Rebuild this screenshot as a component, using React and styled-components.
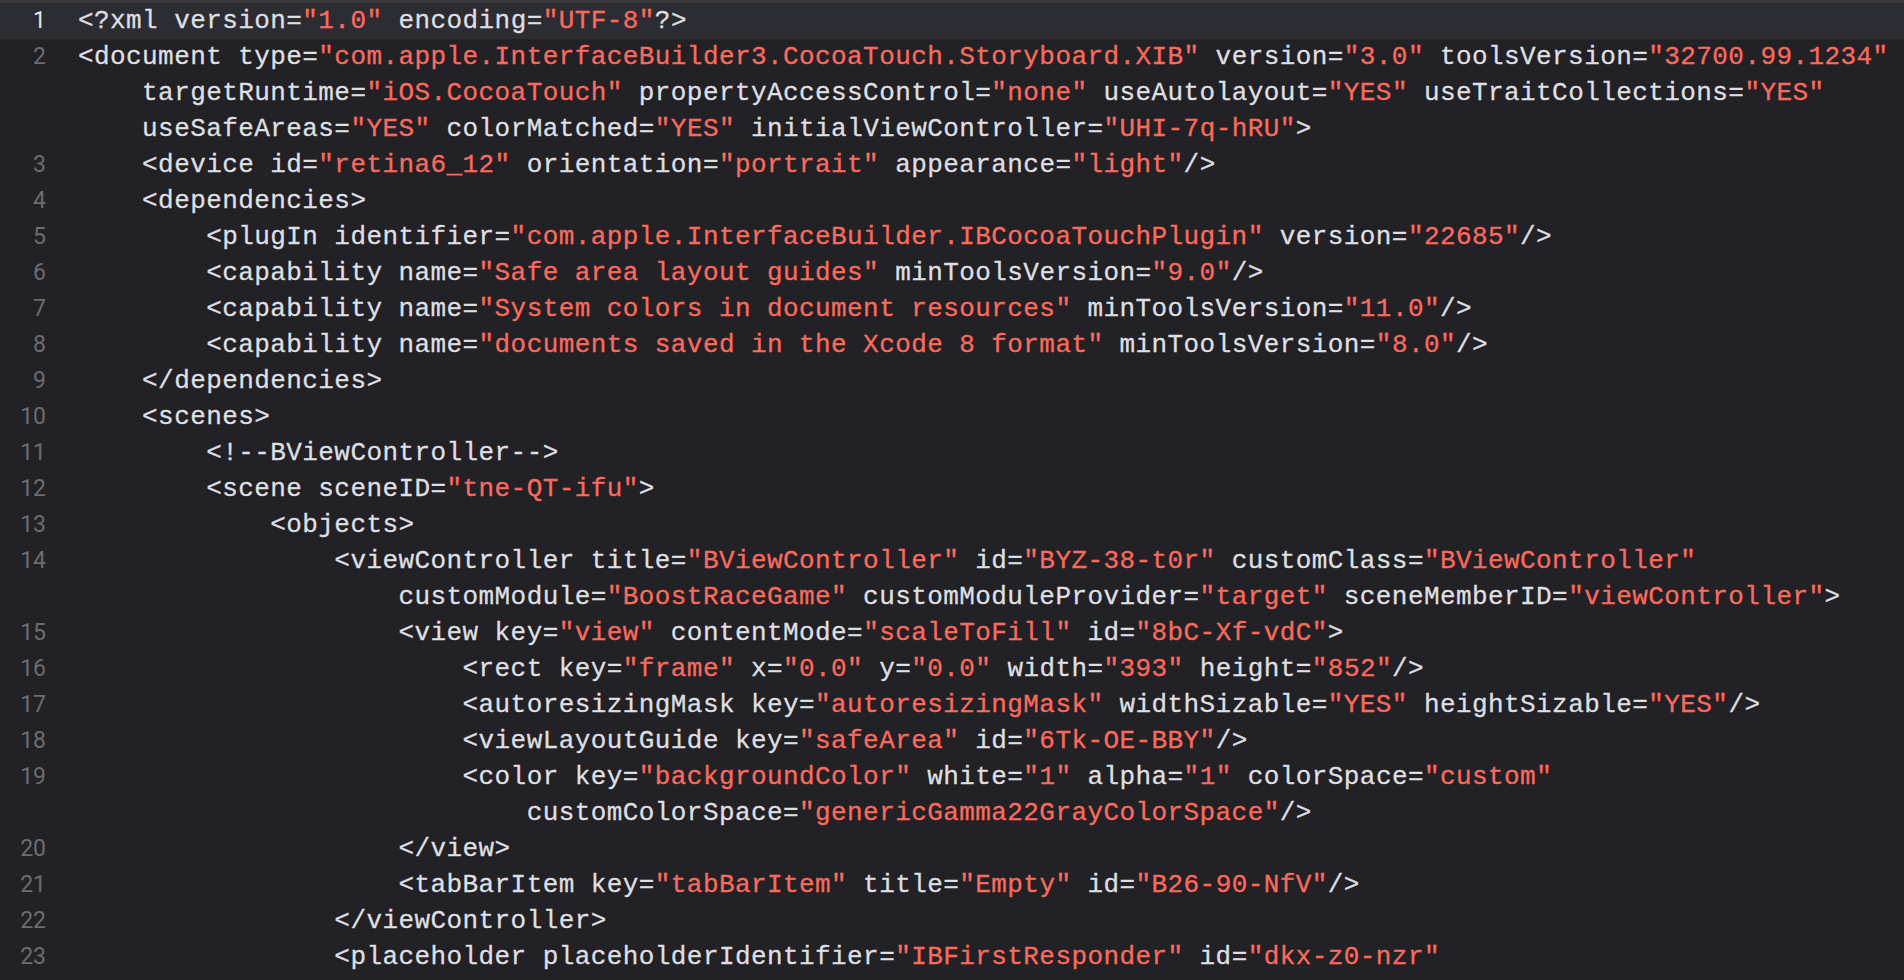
import React from "react";
import styled, { createGlobalStyle } from "styled-components";

const GlobalStyle = createGlobalStyle`
  html, body {
    margin: 0;
    padding: 0;
    background: #212126;
    overflow: hidden;
  }
`;

const lines = [
  [`<?xml version="1.0" encoding="UTF-8"?>`],
  [
    `<document type="com.apple.InterfaceBuilder3.CocoaTouch.Storyboard.XIB" version="3.0" toolsVersion="32700.99.1234"`,
    `    targetRuntime="iOS.CocoaTouch" propertyAccessControl="none" useAutolayout="YES" useTraitCollections="YES"`,
    `    useSafeAreas="YES" colorMatched="YES" initialViewController="UHI-7q-hRU">`,
  ],
  [`    <device id="retina6_12" orientation="portrait" appearance="light"/>`],
  [`    <dependencies>`],
  [`        <plugIn identifier="com.apple.InterfaceBuilder.IBCocoaTouchPlugin" version="22685"/>`],
  [`        <capability name="Safe area layout guides" minToolsVersion="9.0"/>`],
  [`        <capability name="System colors in document resources" minToolsVersion="11.0"/>`],
  [`        <capability name="documents saved in the Xcode 8 format" minToolsVersion="8.0"/>`],
  [`    </dependencies>`],
  [`    <scenes>`],
  [`        <!--BViewController-->`],
  [`        <scene sceneID="tne-QT-ifu">`],
  [`            <objects>`],
  [
    `                <viewController title="BViewController" id="BYZ-38-t0r" customClass="BViewController"`,
    `                    customModule="BoostRaceGame" customModuleProvider="target" sceneMemberID="viewController">`,
  ],
  [`                    <view key="view" contentMode="scaleToFill" id="8bC-Xf-vdC">`],
  [`                        <rect key="frame" x="0.0" y="0.0" width="393" height="852"/>`],
  [`                        <autoresizingMask key="autoresizingMask" widthSizable="YES" heightSizable="YES"/>`],
  [`                        <viewLayoutGuide key="safeArea" id="6Tk-OE-BBY"/>`],
  [
    `                        <color key="backgroundColor" white="1" alpha="1" colorSpace="custom"`,
    `                            customColorSpace="genericGamma22GrayColorSpace"/>`,
  ],
  [`                    </view>`],
  [`                    <tabBarItem key="tabBarItem" title="Empty" id="B26-90-NfV"/>`],
  [`                </viewController>`],
  [
    `                <placeholder placeholderIdentifier="IBFirstResponder" id="dkx-z0-nzr"`,
    `                    sceneMemberID="firstResponder"/>`,
  ],
];

const CURRENT = 0;

export default function App() {
  return (
    <>
      <GlobalStyle />
      <Editor>
        {lines.map((rows, i) => (
          <Line key={i} $current={i === CURRENT}>
            <Num $current={i === CURRENT}>{i + 1}</Num>
            <Code>
              {rows.map((row, j) => (
                <Row key={j}>
                  {row.split(/("[^"]*")/).map((part, k) =>
                    part.startsWith('"') ? (
                      <Str key={k}>{part}</Str>
                    ) : (
                      <React.Fragment key={k}>{part}</React.Fragment>
                    )
                  )}
                </Row>
              ))}
            </Code>
          </Line>
        ))}
      </Editor>
    </>
  );
}

const Editor = styled.div`
  height: 100vh;
  border-top: 3px solid #3a3a3e;
  box-sizing: border-box;
  overflow: hidden;
`;

const Line = styled.div`
  display: grid;
  grid-template-columns: 46px 1fr;
  column-gap: 32px;
  background: ${(p) => (p.$current ? "#2c2d33" : "transparent")};
`;

const Num = styled.div`
  text-align: right;
  font-family: Roboto, "Noto Sans", sans-serif;
  font-size: 23px;
  line-height: 36px;
  color: ${(p) => (p.$current ? "#e4e4e6" : "#6c6c71")};
`;

const Code = styled.div`
  display: flex;
  flex-direction: column;
`;

const Row = styled.div`
  height: 36px;
  line-height: 36px;
  white-space: pre;
  font-family: "Liberation Mono", "DejaVu Sans Mono", monospace;
  font-size: 26px;
  letter-spacing: 0.42px;
  color: #dfdfe0;
  -webkit-text-stroke: 0.3px #dfdfe0;
`;

const Str = styled.span`
  color: #fc6a5d;
  -webkit-text-stroke: 0.3px #fc6a5d;
`;
